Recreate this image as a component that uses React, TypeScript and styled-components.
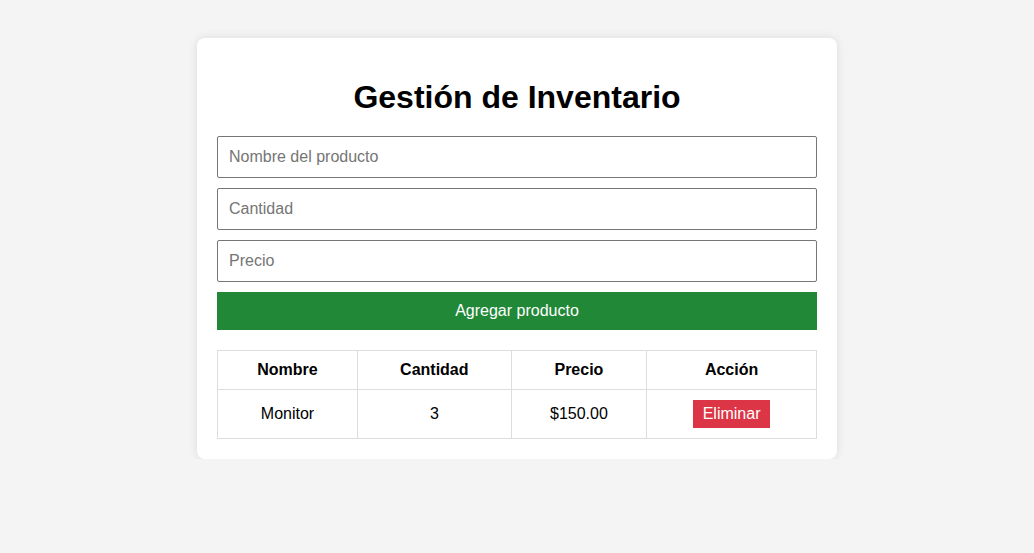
import React from "react";
import styled, { createGlobalStyle } from "styled-components";

const GlobalStyle = createGlobalStyle`
  body {
    margin: 0;
    background: #f4f4f4;
    font-family: "Liberation Sans", Arial, sans-serif;
  }
`;

const Page = styled.div`
  display: flex;
  justify-content: center;
  padding-top: 38px;
`;

const Card = styled.div`
  width: 600px;
  padding: 20px;
  background: #fff;
  border-radius: 8px;
  box-shadow: 0 0 10px rgba(0, 0, 0, 0.1);
`;

const Title = styled.h1`
  margin: 21px 0 20px;
  font-size: 32px;
  line-height: 37px;
  text-align: center;
  color: #000;
`;

const Form = styled.form`
  display: flex;
  flex-direction: column;
  gap: 10px;
`;

const Input = styled.input`
  box-sizing: border-box;
  width: 100%;
  height: 42px;
  padding: 10px 11px;
  font-family: inherit;
  font-size: 16px;
  border: 1px solid #767676;
  border-radius: 2px;
  outline: none;

  &::placeholder {
    color: #757575;
  }
`;

const AddButton = styled.button`
  height: 38px;
  border: none;
  background: #218838;
  color: #fff;
  font-family: inherit;
  font-size: 16px;
  cursor: pointer;
`;

const Table = styled.table`
  width: 100%;
  margin-top: 20px;
  border-collapse: collapse;
`;

const Cell = styled.td<{ $head?: boolean }>`
  padding: 10px;
  border: 1px solid #ddd;
  text-align: center;
  font-size: 16px;
  line-height: 18px;
  font-weight: ${({ $head }) => ($head ? "bold" : "normal")};
  color: #000;
`;

const DeleteButton = styled.button`
  padding: 5px 10px;
  border: none;
  background: #dc3545;
  color: #fff;
  font-family: inherit;
  font-size: 16px;
  line-height: 18px;
  cursor: pointer;
`;

const products = [{ name: "Monitor", qty: 3, price: 150 }];

export default function App() {
  return (
    <>
      <GlobalStyle />
      <Page>
        <Card>
          <Title>Gestión de Inventario</Title>
          <Form onSubmit={(e) => e.preventDefault()}>
            <Input placeholder="Nombre del producto" />
            <Input placeholder="Cantidad" />
            <Input placeholder="Precio" />
            <AddButton type="submit">Agregar producto</AddButton>
          </Form>
          <Table>
            <thead>
              <tr>
                <Cell as="th" $head>Nombre</Cell>
                <Cell as="th" $head>Cantidad</Cell>
                <Cell as="th" $head>Precio</Cell>
                <Cell as="th" $head>Acción</Cell>
              </tr>
            </thead>
            <tbody>
              {products.map((p) => (
                <tr key={p.name}>
                  <Cell>{p.name}</Cell>
                  <Cell>{p.qty}</Cell>
                  <Cell>${p.price.toFixed(2)}</Cell>
                  <Cell>
                    <DeleteButton>Eliminar</DeleteButton>
                  </Cell>
                </tr>
              ))}
            </tbody>
          </Table>
        </Card>
      </Page>
    </>
  );
}
